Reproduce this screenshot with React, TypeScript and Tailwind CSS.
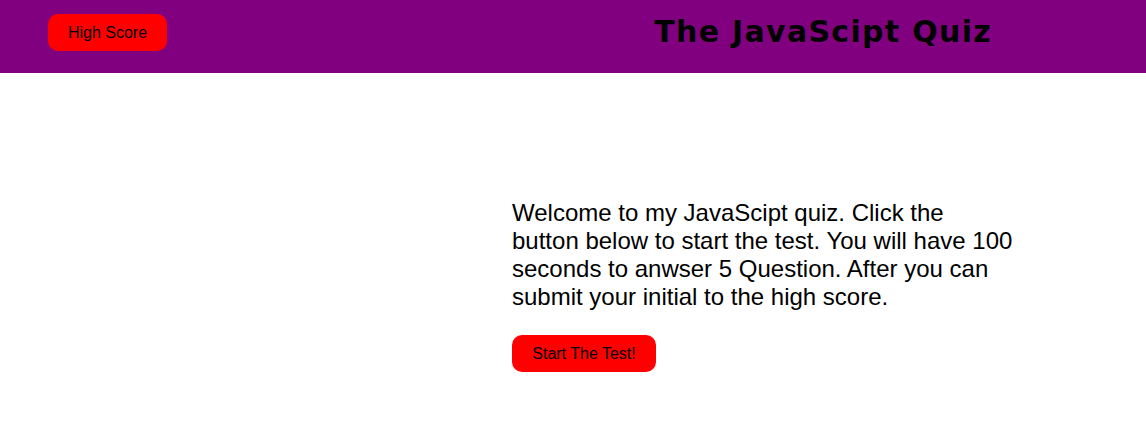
export default function App() {
  return (
    <div className="min-h-[437px] bg-white" style={{ fontFamily: '"Liberation Sans", Arial, sans-serif' }}>
      <header className="flex h-[73px] items-start justify-between bg-[#800080] pl-12 pr-[154px] pt-[14px]">
        <button className="h-[37px] w-[119px] rounded-[10px] bg-[#ff0000] text-base text-black">High Score</button>
        <h1
          className="text-[30px] font-bold leading-[36px] tracking-[1.3px] text-black"
          style={{ fontFamily: '"DejaVu Sans", Verdana, sans-serif' }}
        >
          The JavaScipt Quiz
        </h1>
      </header>
      <main className="pl-[512px] pt-[126px]">
        <p className="w-[504px] text-[24px] leading-[28px] text-black">
          Welcome to my JavaScipt quiz. Click the button below to start the test. You will have 100 seconds to anwser 5 Question. After you can submit your initial to the high score.
        </p>
        <button className="mt-6 h-[37px] w-[144px] rounded-[10px] bg-[#ff0000] text-base text-black">Start The Test!</button>
      </main>
    </div>
  );
}
